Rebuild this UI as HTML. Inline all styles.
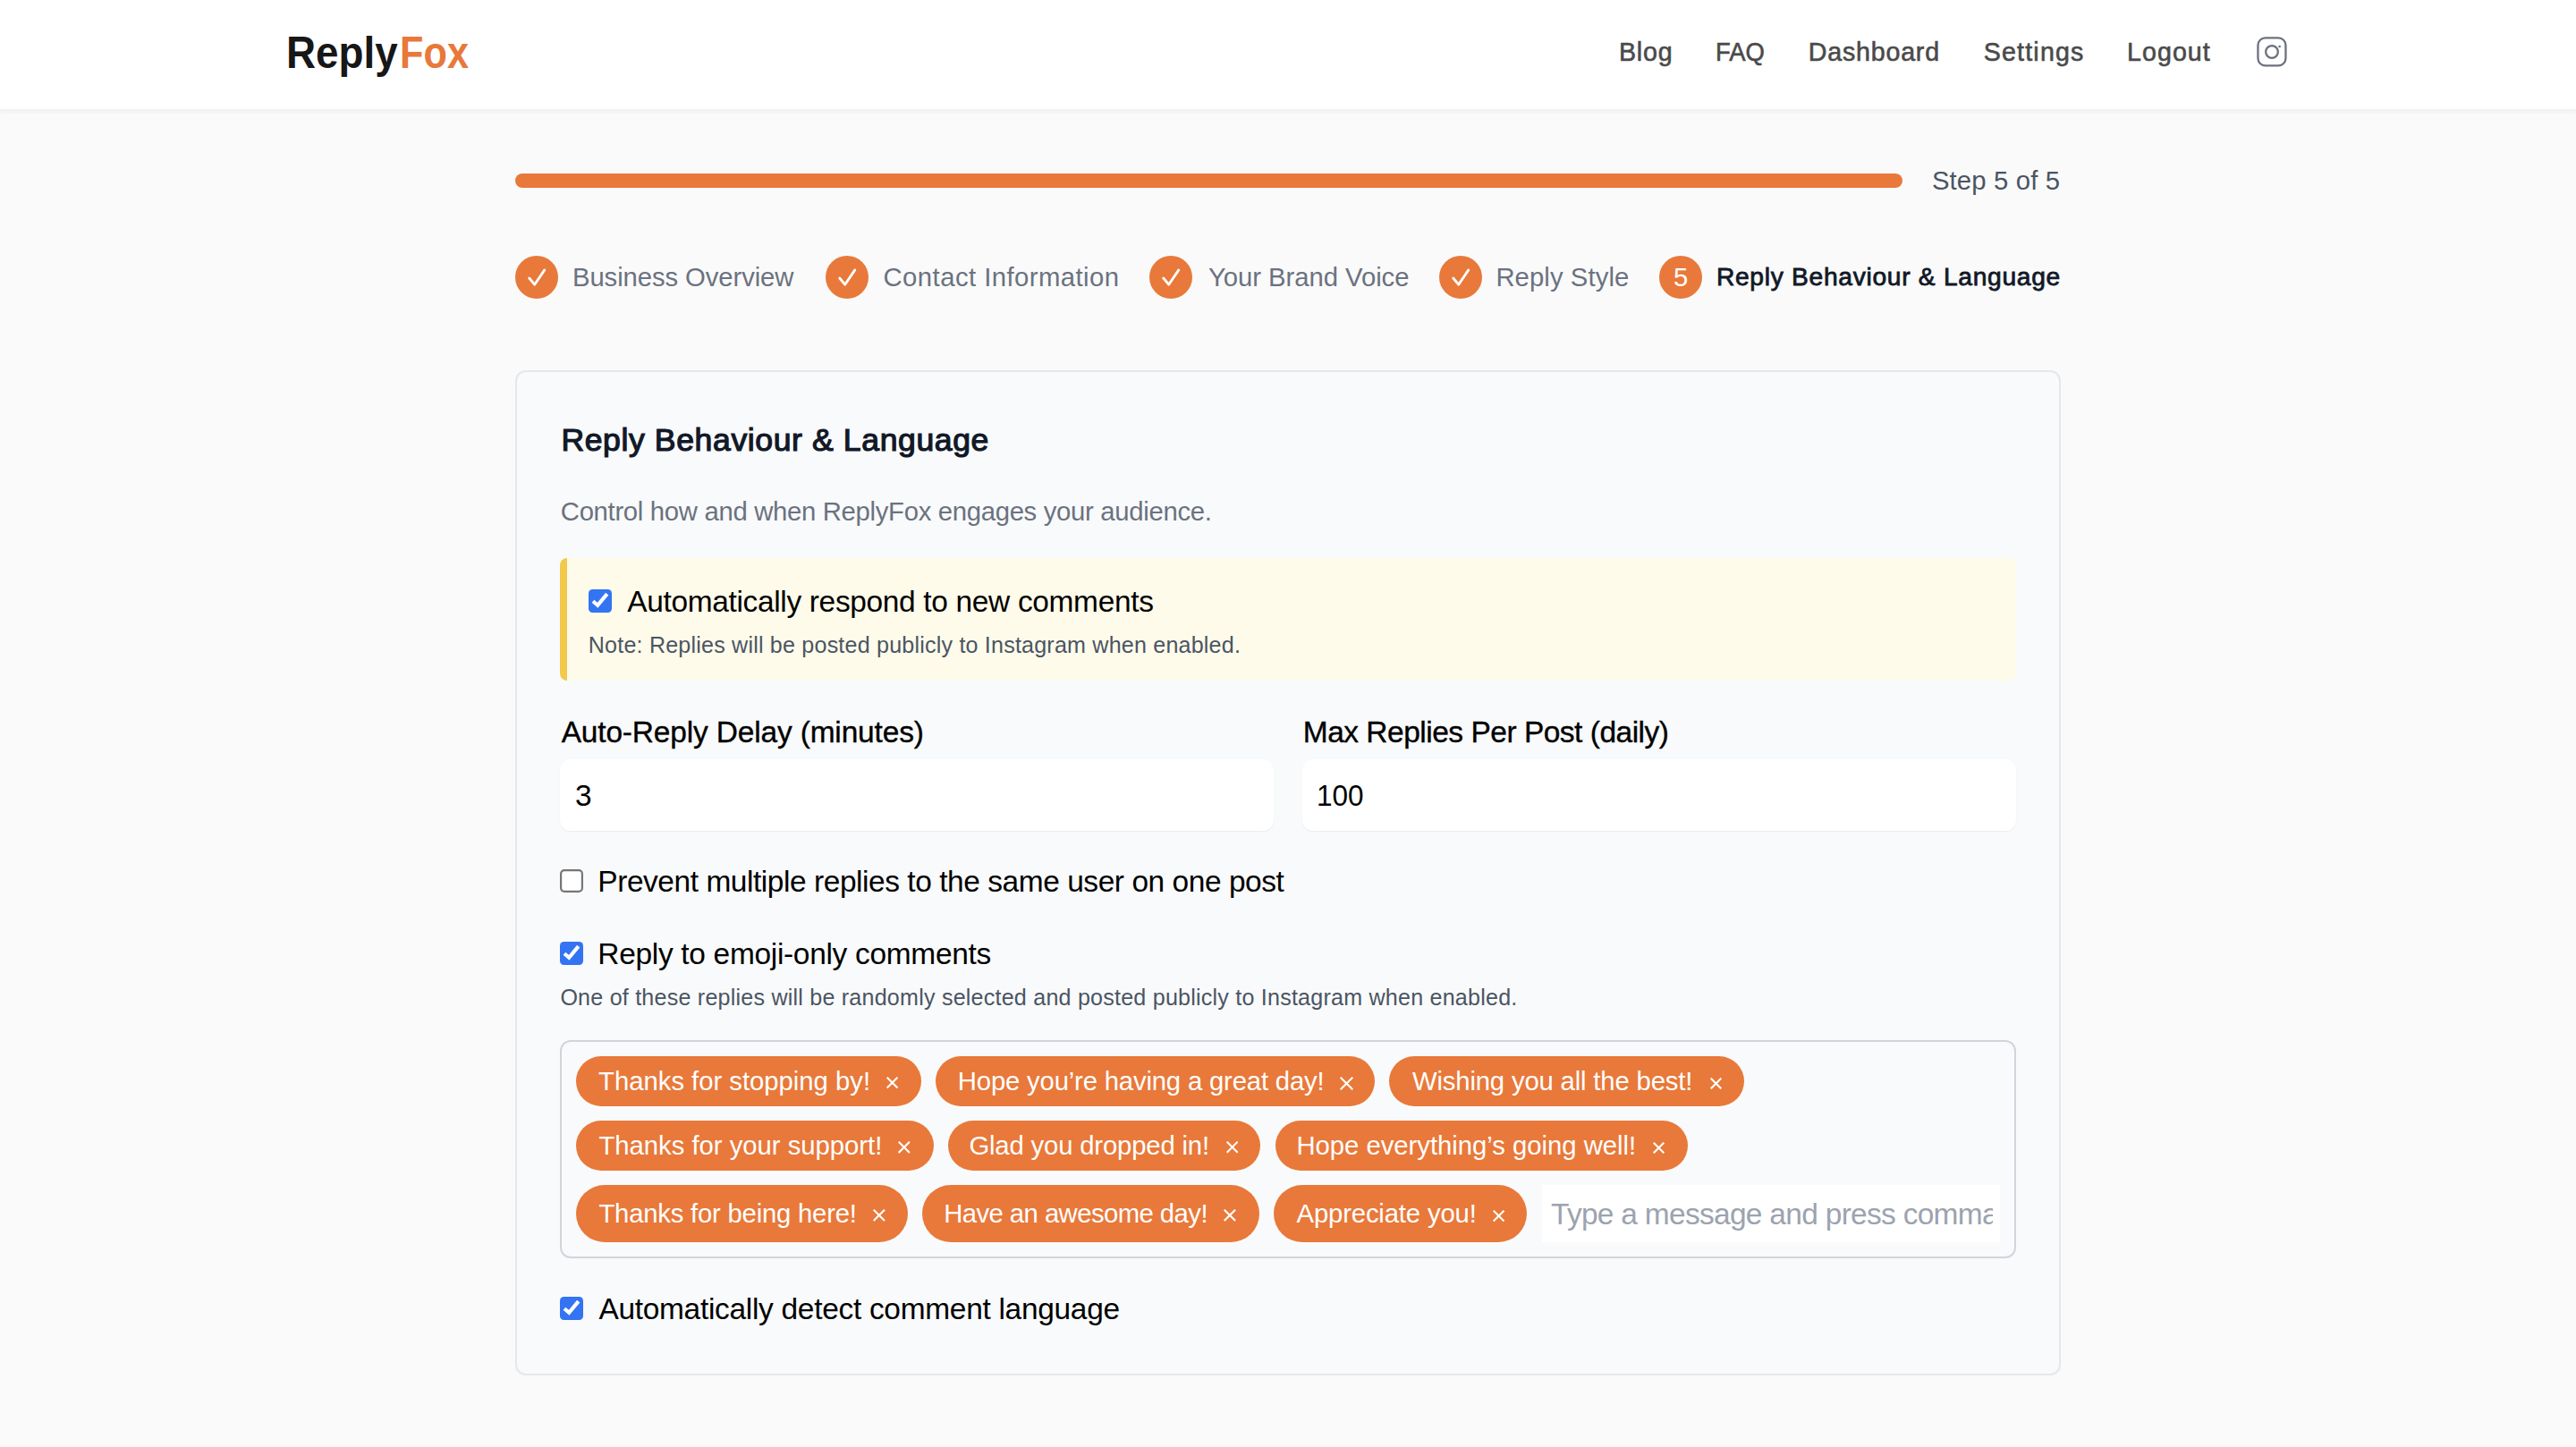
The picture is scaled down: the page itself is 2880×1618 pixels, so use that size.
<!DOCTYPE html>
<html><head><meta charset="utf-8"><style>
html,body{margin:0;padding:0;width:2880px;height:1618px;overflow:hidden;background:#fafafa;font-family:"Liberation Sans",sans-serif}
@media (max-width:2000px) and (min-width:1000px){html{zoom:0.5}}
.t{position:absolute;white-space:nowrap}
</style></head><body>
<div style="position:absolute;left:0.00px;top:0.00px;width:2880.00px;height:122.00px;background:#fff"></div>
<div style="position:absolute;left:0.00px;top:122.00px;width:2880.00px;height:2.00px;background:#f1f2f5;box-shadow:0 2px 3px rgba(0,0,0,0.05)"></div>
<div style="position:absolute;left:576.00px;top:194.00px;width:1551.00px;height:16.00px;background:#e8793a;border-radius:8px"></div>
<div style="position:absolute;left:576.00px;top:414.00px;width:1728.00px;height:1124.00px;background:#f9fafb;border:2px solid #e5e7eb;border-radius:12px;box-sizing:border-box"></div>
<div style="position:absolute;left:626.00px;top:624.00px;width:1628.00px;height:137.00px;background:#fefbea;border-left:8px solid #f2c94a;border-radius:8px;box-sizing:border-box"></div>
<div style="position:absolute;left:626.00px;top:849.00px;width:798.00px;height:80.00px;background:#fff;border-radius:12px;box-shadow:0 1px 2px rgba(0,0,0,0.06)"></div>
<div style="position:absolute;left:1456.00px;top:849.00px;width:798.00px;height:80.00px;background:#fff;border-radius:12px;box-shadow:0 1px 2px rgba(0,0,0,0.06)"></div>
<div style="position:absolute;left:626.00px;top:1163.00px;width:1628.00px;height:244.00px;border:2px solid #d1d5db;border-radius:12px;box-sizing:border-box"></div>
<div style="position:absolute;left:644.20px;top:1181.00px;width:385.80px;height:56.00px;background:#e8793a;border-radius:40px"></div>
<div style="position:absolute;left:1046.00px;top:1181.00px;width:490.90px;height:56.00px;background:#e8793a;border-radius:40px"></div>
<div style="position:absolute;left:1553.20px;top:1181.00px;width:397.30px;height:56.00px;background:#e8793a;border-radius:40px"></div>
<div style="position:absolute;left:644.00px;top:1253.00px;width:399.60px;height:56.00px;background:#e8793a;border-radius:40px"></div>
<div style="position:absolute;left:1060.20px;top:1253.00px;width:349.10px;height:56.00px;background:#e8793a;border-radius:40px"></div>
<div style="position:absolute;left:1425.80px;top:1253.00px;width:461.00px;height:56.00px;background:#e8793a;border-radius:40px"></div>
<div style="position:absolute;left:644.00px;top:1325.00px;width:370.80px;height:64.00px;background:#e8793a;border-radius:40px"></div>
<div style="position:absolute;left:1031.20px;top:1325.00px;width:376.60px;height:64.00px;background:#e8793a;border-radius:40px"></div>
<div style="position:absolute;left:1423.90px;top:1325.00px;width:283.60px;height:64.00px;background:#e8793a;border-radius:40px"></div>
<div style="position:absolute;left:1724.00px;top:1325.00px;width:512.00px;height:64.00px;background:#fff"></div>
<svg style="position:absolute;left:576.00px;top:286px" width="48" height="48" viewBox="0 0 48 48"><circle cx="24" cy="24" r="24" fill="#e8793a"/><polyline points="15.7,25 21.7,32.2 32.8,15.9" fill="none" stroke="#fff" stroke-width="2.8" stroke-linecap="round" stroke-linejoin="round"/></svg>
<svg style="position:absolute;left:923.00px;top:286px" width="48" height="48" viewBox="0 0 48 48"><circle cx="24" cy="24" r="24" fill="#e8793a"/><polyline points="15.7,25 21.7,32.2 32.8,15.9" fill="none" stroke="#fff" stroke-width="2.8" stroke-linecap="round" stroke-linejoin="round"/></svg>
<svg style="position:absolute;left:1285.00px;top:286px" width="48" height="48" viewBox="0 0 48 48"><circle cx="24" cy="24" r="24" fill="#e8793a"/><polyline points="15.7,25 21.7,32.2 32.8,15.9" fill="none" stroke="#fff" stroke-width="2.8" stroke-linecap="round" stroke-linejoin="round"/></svg>
<svg style="position:absolute;left:1609.00px;top:286px" width="48" height="48" viewBox="0 0 48 48"><circle cx="24" cy="24" r="24" fill="#e8793a"/><polyline points="15.7,25 21.7,32.2 32.8,15.9" fill="none" stroke="#fff" stroke-width="2.8" stroke-linecap="round" stroke-linejoin="round"/></svg>
<svg style="position:absolute;left:1855px;top:286px" width="48" height="48" viewBox="0 0 48 48"><circle cx="24" cy="24" r="24" fill="#e8793a"/></svg>
<svg style="position:absolute;left:2510px;top:30px" width="60" height="55" viewBox="0 0 60 55" fill="none" stroke="#6b7280" stroke-width="2.3"><rect x="14.45" y="12.35" width="31" height="31.1" rx="8.2"/><circle cx="30" cy="28" r="6.85"/><circle cx="38.6" cy="22" r="1.35" fill="#6b7280" stroke="none"/></svg>
<svg style="position:absolute;left:658.00px;top:659.00px" width="26" height="26" viewBox="0 0 26 26"><rect x="0" y="0" width="26" height="26" rx="4.5" fill="#3374f2"/><polyline points="5.0,13.2 10.2,17.8 20.7,5.2" fill="none" stroke="#fff" stroke-width="4.2" stroke-linecap="butt" stroke-linejoin="miter"/></svg>
<svg style="position:absolute;left:626.00px;top:972.00px" width="26" height="26" viewBox="0 0 26 26"><rect x="1.1" y="1.1" width="23.8" height="23.8" rx="3.8" fill="#fff" stroke="#767676" stroke-width="2.2"/></svg>
<svg style="position:absolute;left:626.00px;top:1053.00px" width="26" height="26" viewBox="0 0 26 26"><rect x="0" y="0" width="26" height="26" rx="4.5" fill="#3374f2"/><polyline points="5.0,13.2 10.2,17.8 20.7,5.2" fill="none" stroke="#fff" stroke-width="4.2" stroke-linecap="butt" stroke-linejoin="miter"/></svg>
<svg style="position:absolute;left:626.00px;top:1450.00px" width="26" height="26" viewBox="0 0 26 26"><rect x="0" y="0" width="26" height="26" rx="4.5" fill="#3374f2"/><polyline points="5.0,13.2 10.2,17.8 20.7,5.2" fill="none" stroke="#fff" stroke-width="4.2" stroke-linecap="butt" stroke-linejoin="miter"/></svg>
<svg style="position:absolute;left:990.90px;top:1204.40px" width="13.20" height="13.20" viewBox="0 0 13.20 13.20"><path d="M0.7 0.7L12.50 12.50M12.50 0.7L0.7 12.50" stroke="#fff" stroke-width="2.1"/></svg>
<svg style="position:absolute;left:1498.00px;top:1203.50px" width="15.00" height="15.00" viewBox="0 0 15.00 15.00"><path d="M0.7 0.7L14.30 14.30M14.30 0.7L0.7 14.30" stroke="#fff" stroke-width="2.1"/></svg>
<svg style="position:absolute;left:1911.70px;top:1204.50px" width="13.00" height="13.00" viewBox="0 0 13.00 13.00"><path d="M0.7 0.7L12.30 12.30M12.30 0.7L0.7 12.30" stroke="#fff" stroke-width="2.1"/></svg>
<svg style="position:absolute;left:1004.20px;top:1276.20px" width="13.60" height="13.60" viewBox="0 0 13.60 13.60"><path d="M0.7 0.7L12.90 12.90M12.90 0.7L0.7 12.90" stroke="#fff" stroke-width="2.1"/></svg>
<svg style="position:absolute;left:1370.50px;top:1276.30px" width="13.40" height="13.40" viewBox="0 0 13.40 13.40"><path d="M0.7 0.7L12.70 12.70M12.70 0.7L0.7 12.70" stroke="#fff" stroke-width="2.1"/></svg>
<svg style="position:absolute;left:1848.00px;top:1276.50px" width="13.00" height="13.00" viewBox="0 0 13.00 13.00"><path d="M0.7 0.7L12.30 12.30M12.30 0.7L0.7 12.30" stroke="#fff" stroke-width="2.1"/></svg>
<svg style="position:absolute;left:976.00px;top:1352.35px" width="13.70" height="13.70" viewBox="0 0 13.70 13.70"><path d="M0.7 0.7L13.00 13.00M13.00 0.7L0.7 13.00" stroke="#fff" stroke-width="2.1"/></svg>
<svg style="position:absolute;left:1368.00px;top:1352.30px" width="13.80" height="13.80" viewBox="0 0 13.80 13.80"><path d="M0.7 0.7L13.10 13.10M13.10 0.7L0.7 13.10" stroke="#fff" stroke-width="2.1"/></svg>
<svg style="position:absolute;left:1669.00px;top:1352.60px" width="13.20" height="13.20" viewBox="0 0 13.20 13.20"><path d="M0.7 0.7L12.50 12.50M12.50 0.7L0.7 12.50" stroke="#fff" stroke-width="2.1"/></svg>
<div style="position:absolute;left:1724px;top:1325px;width:504px;height:64px;overflow:hidden"><div class="t" style="left:10.00px;top:11.40px;font-size:33.47px;line-height:44px;color:#9ca3af;letter-spacing:-0.7px">Type a message and press comma</div></div>
<div class="t" style="left:320.26px;top:26.00px;font-size:50.21px;line-height:66px;color:#171717;letter-spacing:0.000px;font-weight:700;transform:scaleX(0.9119);transform-origin:0 0">Reply</div>
<div class="t" style="left:446.51px;top:26.00px;font-size:50.21px;line-height:66px;color:#e8793a;letter-spacing:0.000px;font-weight:700;transform:scaleX(0.8629);transform-origin:0 0">Fox</div>
<div class="t" style="left:1810.00px;top:39.00px;font-size:28.60px;line-height:38px;color:#4a4a4a;letter-spacing:0.791px;-webkit-text-stroke:0.60px #4a4a4a">Blog</div>
<div class="t" style="left:1918.08px;top:39.00px;font-size:28.60px;line-height:38px;color:#4a4a4a;letter-spacing:0.000px;transform:scaleX(0.9581);transform-origin:0 0;-webkit-text-stroke:0.60px #4a4a4a">FAQ</div>
<div class="t" style="left:2021.80px;top:39.00px;font-size:28.60px;line-height:38px;color:#4a4a4a;letter-spacing:0.802px;-webkit-text-stroke:0.60px #4a4a4a">Dashboard</div>
<div class="t" style="left:2217.70px;top:39.00px;font-size:28.60px;line-height:38px;color:#4a4a4a;letter-spacing:1.197px;-webkit-text-stroke:0.60px #4a4a4a">Settings</div>
<div class="t" style="left:2378.00px;top:39.00px;font-size:28.60px;line-height:38px;color:#4a4a4a;letter-spacing:1.058px;-webkit-text-stroke:0.60px #4a4a4a">Logout</div>
<div class="t" style="left:2159.90px;top:182.00px;font-size:29.29px;line-height:39px;color:#4b5563;letter-spacing:0.145px">Step 5 of 5</div>
<div class="t" style="left:640.00px;top:290.00px;font-size:29.29px;line-height:39px;color:#6b7280;letter-spacing:-0.096px">Business Overview</div>
<div class="t" style="left:987.50px;top:290.00px;font-size:29.29px;line-height:39px;color:#6b7280;letter-spacing:0.448px">Contact Information</div>
<div class="t" style="left:1351.00px;top:290.00px;font-size:29.29px;line-height:39px;color:#6b7280;letter-spacing:-0.048px">Your Brand Voice</div>
<div class="t" style="left:1672.40px;top:290.00px;font-size:29.29px;line-height:39px;color:#6b7280;letter-spacing:0.079px">Reply Style</div>
<div class="t" style="left:1918.90px;top:291.00px;font-size:28.20px;line-height:37px;color:#111827;letter-spacing:0.707px;-webkit-text-stroke:0.80px #111827">Reply Behaviour &amp; Language</div>
<div class="t" style="left:1871.00px;top:290.00px;font-size:29.29px;line-height:39px;color:#ffffff;letter-spacing:0.000px">5</div>
<div class="t" style="left:627.40px;top:469.00px;font-size:35.60px;line-height:47px;color:#111827;letter-spacing:0.606px;-webkit-text-stroke:1.20px #111827">Reply Behaviour &amp; Language</div>
<div class="t" style="left:626.80px;top:552.00px;font-size:29.29px;line-height:39px;color:#6b7280;letter-spacing:-0.311px">Control how and when ReplyFox engages your audience.</div>
<div class="t" style="left:701.20px;top:651.00px;font-size:33.47px;line-height:44px;color:#000000;letter-spacing:-0.337px">Automatically respond to new comments</div>
<div class="t" style="left:657.80px;top:705.00px;font-size:25.10px;line-height:33px;color:#4b5563;letter-spacing:0.192px">Note: Replies will be posted publicly to Instagram when enabled.</div>
<div class="t" style="left:627.67px;top:797.00px;font-size:33.47px;line-height:44px;color:#000000;letter-spacing:-0.160px;-webkit-text-stroke:0.35px #000000">Auto-Reply Delay (minutes)</div>
<div class="t" style="left:1456.77px;top:797.00px;font-size:33.47px;line-height:44px;color:#000000;letter-spacing:-0.482px;-webkit-text-stroke:0.35px #000000">Max Replies Per Post (daily)</div>
<div class="t" style="left:643.00px;top:868.00px;font-size:33.47px;line-height:44px;color:#000000;letter-spacing:0.000px">3</div>
<div class="t" style="left:1471.92px;top:868.00px;font-size:33.47px;line-height:44px;color:#000000;letter-spacing:0.000px;transform:scaleX(0.9412);transform-origin:0 0">100</div>
<div class="t" style="left:668.30px;top:964.00px;font-size:33.47px;line-height:44px;color:#000000;letter-spacing:-0.444px">Prevent multiple replies to the same user on one post</div>
<div class="t" style="left:668.30px;top:1045.00px;font-size:33.47px;line-height:44px;color:#000000;letter-spacing:-0.309px">Reply to emoji-only comments</div>
<div class="t" style="left:626.40px;top:1099.00px;font-size:25.10px;line-height:33px;color:#4b5563;letter-spacing:0.212px">One of these replies will be randomly selected and posted publicly to Instagram when enabled.</div>
<div class="t" style="left:669.10px;top:1189.00px;font-size:29.29px;line-height:39px;color:#ffffff;letter-spacing:-0.020px">Thanks for stopping by!</div>
<div class="t" style="left:1070.80px;top:1189.00px;font-size:29.29px;line-height:39px;color:#ffffff;letter-spacing:-0.175px">Hope you’re having a great day!</div>
<div class="t" style="left:1579.00px;top:1189.00px;font-size:29.29px;line-height:39px;color:#ffffff;letter-spacing:-0.168px">Wishing you all the best!</div>
<div class="t" style="left:669.40px;top:1261.00px;font-size:29.29px;line-height:39px;color:#ffffff;letter-spacing:-0.019px">Thanks for your support!</div>
<div class="t" style="left:1083.40px;top:1261.00px;font-size:29.29px;line-height:39px;color:#ffffff;letter-spacing:-0.164px">Glad you dropped in!</div>
<div class="t" style="left:1449.40px;top:1261.00px;font-size:29.29px;line-height:39px;color:#ffffff;letter-spacing:-0.022px">Hope everything’s going well!</div>
<div class="t" style="left:669.40px;top:1337.00px;font-size:29.29px;line-height:39px;color:#ffffff;letter-spacing:-0.212px">Thanks for being here!</div>
<div class="t" style="left:1055.20px;top:1337.00px;font-size:29.29px;line-height:39px;color:#ffffff;letter-spacing:-0.561px">Have an awesome day!</div>
<div class="t" style="left:1449.50px;top:1337.00px;font-size:29.29px;line-height:39px;color:#ffffff;letter-spacing:-0.152px">Appreciate you!</div>
<div class="t" style="left:669.40px;top:1442.00px;font-size:33.47px;line-height:44px;color:#000000;letter-spacing:-0.299px">Automatically detect comment language</div>
</body></html>
